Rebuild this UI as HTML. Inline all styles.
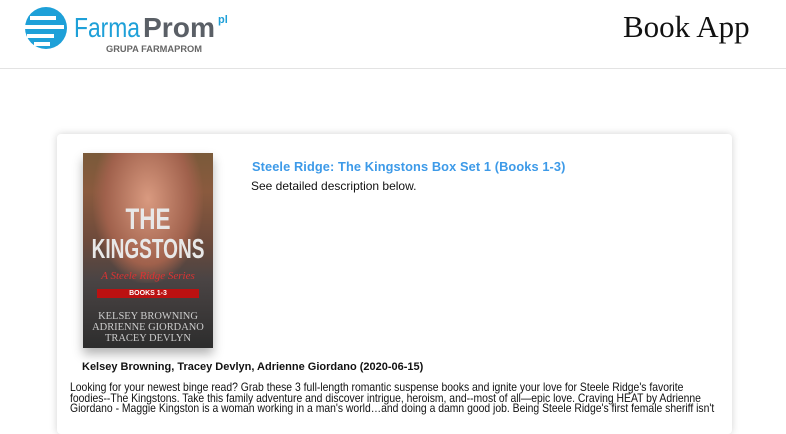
<!DOCTYPE html>
<html><head><meta charset="utf-8"><style>
*{margin:0;padding:0;box-sizing:border-box}
body{width:786px;height:417px;overflow:hidden;background:#fff;font-family:"Liberation Sans",Arial,sans-serif;position:relative}
.hdr{position:absolute;left:0;top:0;width:786px;height:69px;border-bottom:1px solid #e3e3e3;background:#fff}
.app{position:absolute;left:623px;top:9px;font-family:"Liberation Serif",serif;font-size:31px;color:#111}
.card{position:absolute;left:57px;top:134px;width:675px;height:300px;background:#fff;border-radius:4px;box-shadow:0 0 8px rgba(0,0,0,.18)}
.cover{position:absolute;left:83px;top:153px;width:130px;height:195px;background:linear-gradient(#7a5a3a 0%,#8a5a3e 20%,#6d4a3b 45%,#4a4444 65%,#2d2d2d 100%);box-shadow:0 6px 10px rgba(0,0,0,.3);overflow:hidden;text-align:center;color:#ddd}
.body1{position:absolute;left:10px;top:-10px;width:110px;height:140px;background:radial-gradient(ellipse at 50% 40%,#d99a80,#a0614c 55%,transparent 72%)}
.the{position:absolute;top:50px;left:0;width:100%;font:bold 30px "Liberation Sans",sans-serif;color:#e8e8e8;transform:scaleX(.75)}
.king{position:absolute;top:80px;left:-20px;width:170px;font:bold 28px "Liberation Sans",sans-serif;color:#e8e8e8;transform:scaleX(.68)}
.ser{position:absolute;top:117px;width:100%;font:italic 11px "Liberation Serif",serif;color:#d33}
.bk{position:absolute;top:136px;left:14px;width:102px;height:9px;background:#b11;color:#fff;font:bold 7px sans-serif;line-height:9px}
.au{position:absolute;top:158px;width:100%;font:11px "Liberation Serif",serif;line-height:11px;color:#ccc;transform:scaleX(.95)}
.logo{position:absolute;left:22px;top:4px}
.t{position:absolute;left:252px;top:159px;font-size:12.8px;font-weight:bold;color:#3d9ae8;letter-spacing:.1px}
.s{position:absolute;left:251px;top:179px;font-size:12px;color:#111}
.a{position:absolute;left:82px;top:361px;font-size:11px;font-weight:bold;color:#111}
.d{position:absolute;left:70px;top:383px;width:760px;font-size:11.6px;line-height:10.5px;color:#111;transform:scaleX(.895);transform-origin:0 0}
</style></head><body>
<div class="hdr">
<svg class="logo" width="220" height="52" viewBox="0 0 220 52">
<circle cx="24" cy="24" r="21" fill="#1ea0d8"/>
<g stroke="#fff" stroke-width="4" fill="none"><path d="M8 14H34"/><path d="M3 23H42"/><path d="M5 32H32"/><path d="M12 40H28"/></g>
<text x="52" y="33" font-family="Liberation Sans,sans-serif" font-size="28" fill="#1ea0d8" textLength="66" lengthAdjust="spacingAndGlyphs">Farma</text>
<text x="121" y="33" font-family="Liberation Sans,sans-serif" font-size="28" font-weight="bold" fill="#5a5f66" textLength="72" lengthAdjust="spacingAndGlyphs">Prom</text>
<text x="196" y="19" font-family="Liberation Sans,sans-serif" font-size="11" font-weight="bold" fill="#1ea0d8">pl</text>
<text x="84" y="48" font-family="Liberation Sans,sans-serif" font-size="9" font-weight="bold" fill="#666" textLength="96" lengthAdjust="spacingAndGlyphs">GRUPA FARMAPROM</text>
</svg>
<div class="app">Book App</div>
</div>
<div class="card"></div>
<div class="cover"><div class="body1"></div><div class="the">THE</div><div class="king">KINGSTONS</div><div class="ser">A Steele Ridge Series</div><div class="bk">BOOKS 1-3</div><div class="au">KELSEY BROWNING<br>ADRIENNE GIORDANO<br>TRACEY DEVLYN</div></div>
<div class="t">Steele Ridge: The Kingstons Box Set 1 (Books 1-3)</div>
<div class="s">See detailed description below.</div>
<div class="a">Kelsey Browning, Tracey Devlyn, Adrienne Giordano (2020-06-15)</div>
<div class="d">Looking for your newest binge read? Grab these 3 full-length romantic suspense books and ignite your love for Steele Ridge's favorite<br>foodies--The Kingstons. Take this family adventure and discover intrigue, heroism, and--most of all—epic love. Craving HEAT by Adrienne<br>Giordano - Maggie Kingston is a woman working in a man's world…and doing a damn good job. Being Steele Ridge's first female sheriff isn't</div>
</body></html>
